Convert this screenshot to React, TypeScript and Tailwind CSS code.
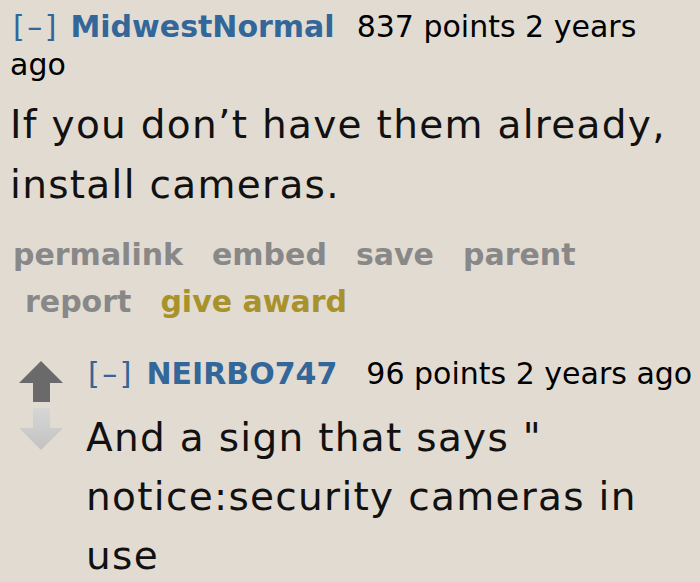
import React from "react";

function UpArrow() {
  return (
    <svg width="44" height="41" viewBox="0 0 44 41">
      <path d="M22 0 L44 22 L31 22 L31 41 L14 41 L14 22 L0 22 Z" fill="#6a6a6a" />
    </svg>
  );
}

function DownArrow() {
  return (
    <svg width="44" height="42" viewBox="0 0 44 42">
      <defs>
        <linearGradient id="dg" x1="0" y1="0" x2="0" y2="1">
          <stop offset="0" stopColor="#d6d6d6" />
          <stop offset="1" stopColor="#c2c2c2" />
        </linearGradient>
      </defs>
      <path d="M14 0 L31 0 L31 20 L44 20 L22 42 L0 20 L14 20 Z" fill="url(#dg)" />
    </svg>
  );
}

function App() {
  const font = { fontFamily: "Verdana, 'DejaVu Sans', sans-serif" };
  return (
    <div className="w-[700px] h-[582px] overflow-hidden bg-[#e2dbd2] pl-[10px] pt-[8px]" style={font}>
      <div className="text-[30px] leading-[38px] text-black pr-[40px]">
        <span className="text-[#336699] pl-[3px] tracking-[2.5px]">[–]</span>{" "}
        <span className="text-[#336699] font-bold ml-[2px]">MidwestNormal</span>
        <span className="ml-[22px] whitespace-nowrap">837 points 2 years</span>{" "}
        <span>ago</span>
      </div>
      <div className="text-[39px] leading-[60px] tracking-[1.3px] text-[#111] mt-[11px]">
        If you don’t have them already, install cameras.
      </div>
      <div className="flex flex-wrap gap-x-[29px] text-[30px] leading-[47px] font-bold text-[#888888] mt-[16px] pr-[100px]">
        <span className="ml-[3px]">permalink</span>
        <span>embed</span>
        <span>save</span>
        <span>parent</span>
        <span className="ml-[15px]">report</span>
        <span className="text-[#a8922c]">give award</span>
      </div>
      <div className="flex mt-[30px]">
        <div className="flex flex-col w-[78px] pt-[6px] pl-[9px] gap-[6px]">
          <UpArrow />
          <DownArrow />
        </div>
        <div className="flex-1">
          <div className="text-[30px] leading-[38px] text-black whitespace-nowrap">
            <span className="text-[#336699] tracking-[2.5px]">[–]</span>{" "}
            <span className="text-[#336699] font-bold ml-[3px]">NEIRBO747</span>
            <span className="ml-[29px]">96 points 2 years ago</span>
          </div>
          <div className="text-[39px] leading-[59px] tracking-[1.3px] text-[#111] mt-[15px] -ml-[2px]">
            And a sign that says " notice:security cameras in use
          </div>
        </div>
      </div>
    </div>
  );
}

export default App;
